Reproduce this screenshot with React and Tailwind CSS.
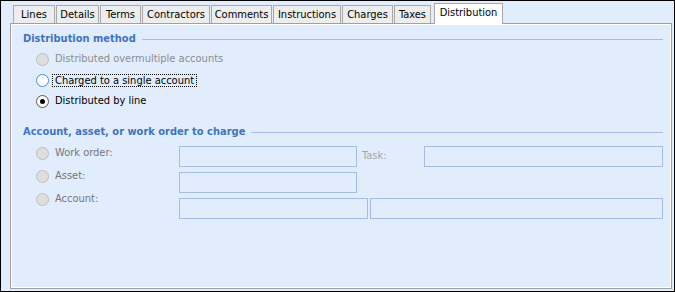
import React from "react";

const tabs = [
  { label: "Lines", w: "w-[42px]" },
  { label: "Details", w: "w-[43px]" },
  { label: "Terms", w: "w-[41px]" },
  { label: "Contractors", w: "w-[68px]" },
  { label: "Comments", w: "w-[61px]" },
  { label: "Instructions", w: "w-[68px]" },
  { label: "Charges", w: "w-[51px]" },
  { label: "Taxes", w: "w-[37px]" },
];

const Radio = ({ state }) => {
  if (state === "disabled")
    return <span className="w-[13px] h-[13px] rounded-full border border-[#bdbdbd] bg-[#dedede] shrink-0" />;
  if (state === "checked")
    return (
      <span className="w-[13px] h-[13px] rounded-full border border-[#5a5a5a] bg-white shrink-0 flex items-center justify-center">
        <span className="w-[5px] h-[5px] rounded-full bg-black" />
      </span>
    );
  return <span className="w-[13px] h-[13px] rounded-full border border-[#3c91e6] bg-white shrink-0" />;
};

const Header = ({ children, mt }) => (
  <div className={`flex items-center h-[14px] pl-[11px] pr-[7px] ${mt}`}>
    <span className="font-bold text-[#3f74bf] whitespace-nowrap">{children}</span>
    <span className="flex-1 h-px bg-[#a5bde2] ml-[6px]" />
  </div>
);

const Box = ({ w }) => <div className={`h-[21px] border border-[#a3bde4] ${w}`} />;

const App = () => {
  return (
    <div className="w-[675px] h-[292px] bg-[#e1edfd] border border-black flex flex-col text-[11px] text-black font-['DejaVu_Sans_Condensed','DejaVu_Sans',sans-serif] overflow-hidden">
      {/* tab strip */}
      <div className="flex items-end h-[22px] pt-[2px] pl-[12px]">
        {tabs.map((t) => (
          <div
            key={t.label}
            className={`${t.w} h-[18px] mr-px bg-[#ededed] border border-b-0 border-[#a9a9a9] flex items-center justify-center leading-none`}
          >
            {t.label}
          </div>
        ))}
        <div className="w-[69px] h-[21px] ml-[2px] -mb-px relative z-10 bg-white border border-b-0 border-[#a9a9a9] flex justify-center pt-[3px] leading-none">
          Distribution
        </div>
      </div>

      {/* panel */}
      <div className="ml-[9px] mr-[2px] h-[266px] border border-[#a0a0a0]">
        <div className="h-full border border-white flex flex-col">
          <Header mt="mt-[7px]">Distribution method</Header>

          <div className="flex flex-col pl-[24px] mt-[3px]">
            <div className="flex items-center h-[21px]">
              <Radio state="disabled" />
              <span className="ml-[6px] text-[#8c8c8c]">Distributed overmultiple accounts</span>
            </div>
            <div className="flex items-center h-[21px]">
              <Radio state="unchecked" />
              <span className="ml-[3px] px-[2px] border border-dotted border-black leading-[11px]">
                Charged to a single account
              </span>
            </div>
            <div className="flex items-center h-[21px]">
              <Radio state="checked" />
              <span className="ml-[6px]">Distributed by line</span>
            </div>
          </div>

          <Header mt="mt-[13px]">Account, asset, or work order to charge</Header>

          <div className="flex items-start">
            <div className="w-[167px] pl-[24px] mt-[3px] flex flex-col text-[#767676]">
              <div className="flex items-center h-[23px]">
                <Radio state="disabled" />
                <span className="ml-[6px]">Work order:</span>
              </div>
              <div className="flex items-center h-[22px]">
                <Radio state="disabled" />
                <span className="ml-[6px]">Asset:</span>
              </div>
              <div className="flex items-center h-[24px]">
                <Radio state="disabled" />
                <span className="ml-[6px]">Account:</span>
              </div>
            </div>

            <div className="flex-1 pr-[7px] mt-[7px] flex flex-col gap-[5px]">
              <div className="flex items-center">
                <Box w="w-[178px]" />
                <span className="w-[67px] pl-[5px] text-[#a6a6a6]">Task:</span>
                <Box w="flex-1" />
              </div>
              <div className="flex">
                <Box w="w-[178px]" />
              </div>
              <div className="flex gap-[2px]">
                <Box w="w-[189px]" />
                <Box w="flex-1" />
              </div>
            </div>
          </div>
        </div>
      </div>
    </div>
  );
};

export default App;
